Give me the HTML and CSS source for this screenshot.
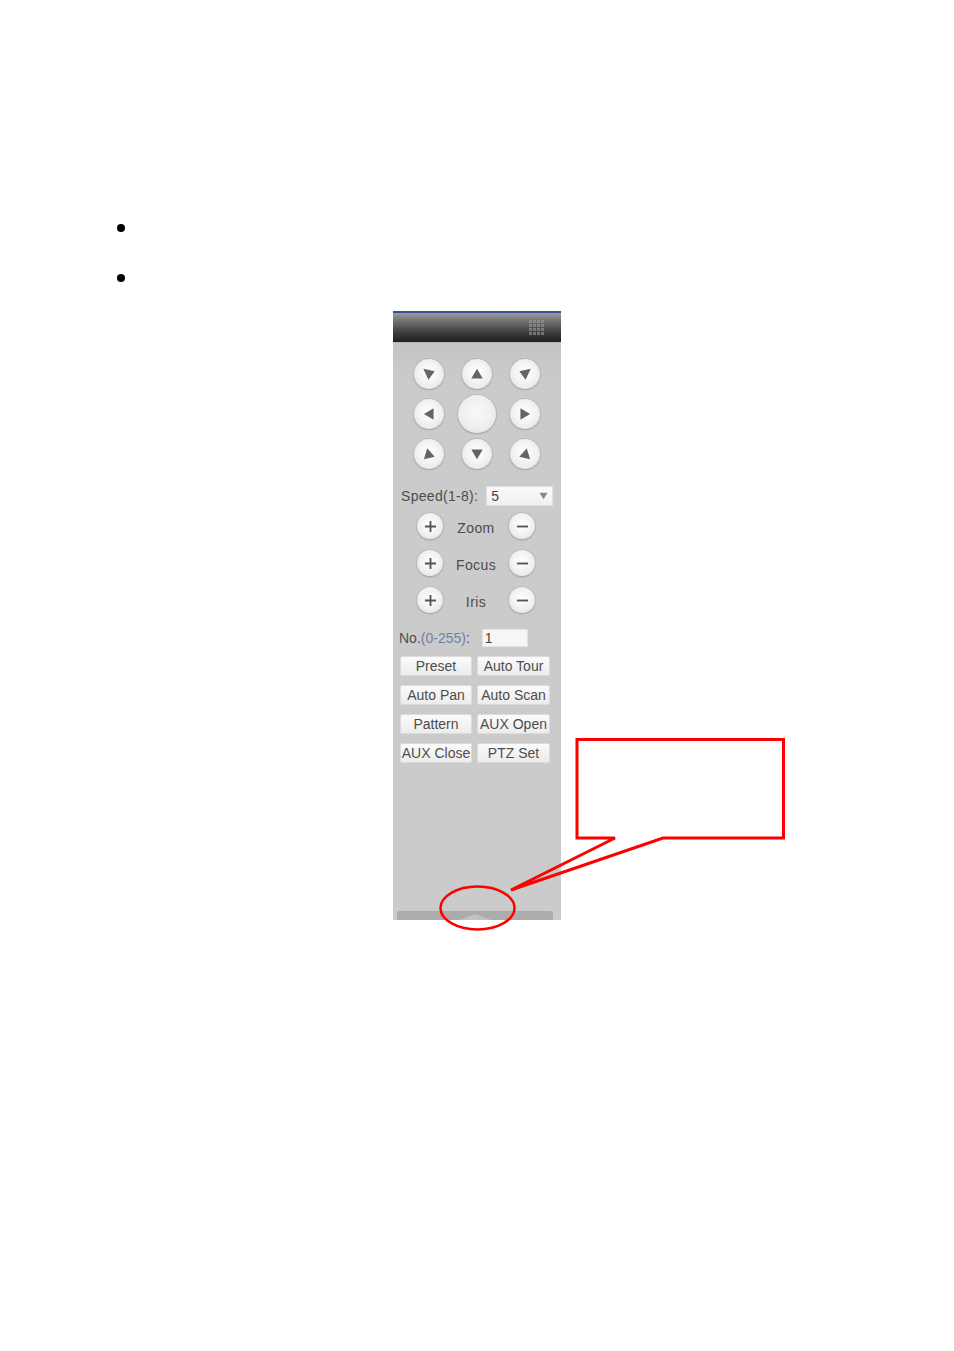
FILE: index.html
```html
<!DOCTYPE html>
<html>
<head>
<meta charset="utf-8">
<title>PTZ</title>
<link rel="stylesheet" href="styles.css">
</head>
<body>
<div class="page">
  <ul class="bullets">
    <li></li>
    <li></li>
  </ul>

  <div class="ptz">
    <div class="ptz-head">
      <span class="grip">
        <i></i><i></i><i></i><i></i>
        <i></i><i></i><i></i><i></i>
        <i></i><i></i><i></i><i></i>
        <i></i><i></i><i></i><i></i>
      </span>
    </div>
    <div class="ptz-body">
      <div class="dir">
        <button class="rb"><svg class="ar" viewBox="0 0 14 14"><path d="M2 2.5 L12 4.5 L6.5 12Z"/></svg></button>
        <button class="rb"><svg class="ar" viewBox="0 0 14 14"><path d="M2 11 L12 11 L7 2.5Z"/></svg></button>
        <button class="rb"><svg class="ar" viewBox="0 0 14 14"><path d="M12 2.5 L2 4.5 L7.5 12Z"/></svg></button>
        <button class="rb"><svg class="ar" viewBox="0 0 14 14"><path d="M11 2 L11 12 L2.5 7Z"/></svg></button>
        <button class="rb center"></button>
        <button class="rb"><svg class="ar" viewBox="0 0 14 14"><path d="M3 2 L3 12 L11.5 7Z"/></svg></button>
        <button class="rb"><svg class="ar" viewBox="0 0 14 14"><path d="M2.5 11.5 L12 9.5 L5.5 2Z"/></svg></button>
        <button class="rb"><svg class="ar" viewBox="0 0 14 14"><path d="M2 3 L12 3 L7 11.5Z"/></svg></button>
        <button class="rb"><svg class="ar" viewBox="0 0 14 14"><path d="M11.5 11.5 L2 9.5 L8.5 2Z"/></svg></button>
      </div>

      <div class="speed">
        <span class="lbl">Speed(1-8):</span>
        <div class="select"><span>5</span><svg class="dd" viewBox="0 0 10 8"><path d="M0.5 0.5 L9.5 0.5 L5 7.5Z"/></svg></div>
      </div>

      <div class="adj first">
        <button class="pm"><svg viewBox="0 0 14 14"><path d="M7 1 V13 M1 7 H13"/></svg></button>
        <span class="adj-lbl">Zoom</span>
        <button class="pm"><svg viewBox="0 0 14 14"><path d="M1 7 H13"/></svg></button>
      </div>
      <div class="adj">
        <button class="pm"><svg viewBox="0 0 14 14"><path d="M7 1 V13 M1 7 H13"/></svg></button>
        <span class="adj-lbl">Focus</span>
        <button class="pm"><svg viewBox="0 0 14 14"><path d="M1 7 H13"/></svg></button>
      </div>
      <div class="adj">
        <button class="pm"><svg viewBox="0 0 14 14"><path d="M7 1 V13 M1 7 H13"/></svg></button>
        <span class="adj-lbl">Iris</span>
        <button class="pm"><svg viewBox="0 0 14 14"><path d="M1 7 H13"/></svg></button>
      </div>

      <div class="no">
        <span class="lbl">No.<span class="sel">(0-255)</span>:</span>
        <div class="input">1</div>
      </div>

      <div class="btns">
        <button class="fb">Preset</button>
        <button class="fb">Auto Tour</button>
        <button class="fb">Auto Pan</button>
        <button class="fb">Auto Scan</button>
        <button class="fb">Pattern</button>
        <button class="fb">AUX Open</button>
        <button class="fb">AUX Close</button>
        <button class="fb">PTZ Set</button>
      </div>

      <div class="tab"><span class="bump"></span></div>
    </div>
  </div>

  <svg class="callout" width="954" height="1351" viewBox="0 0 954 1351">
    <path d="M577 739.5 H783.5 V838 H663 L511 890 L615 838 H577 Z" fill="none" stroke="#ff0000" stroke-width="3"/>
    <ellipse cx="477.5" cy="908" rx="37" ry="21.5" fill="none" stroke="#ff0000" stroke-width="2.5"/>
  </svg>
</div>
</body>
</html>
```

FILE: styles.css
```css
html, body {
  margin: 0;
  padding: 0;
  background: #ffffff;
}

.page {
  position: relative;
  width: 954px;
  min-height: 1351px;
  font-family: "Liberation Sans", Arial, sans-serif;
}

.bullets {
  list-style: none;
  margin: 0;
  padding: 203px 0 0 0;
}

.bullets li {
  position: relative;
  height: 50px;
}

.bullets li::before {
  content: "";
  position: absolute;
  left: 117px;
  top: 21px;
  width: 8px;
  height: 8px;
  border-radius: 50%;
  background: #000;
}

.ptz {
  width: 168px;
  height: 609px;
  margin: 8px auto 0;
  display: flex;
  flex-direction: column;
  background: #cbcbcb;
}

.ptz-head {
  height: 29px;
  border-top: 2px solid #2f5597;
  background: linear-gradient(#9a9ca0 0%, #6e6e70 30%, #3a3a3a 70%, #1f1f1f 100%);
  display: flex;
  justify-content: flex-end;
  align-items: center;
  padding-right: 17px;
}

.grip {
  display: grid;
  grid-template-columns: repeat(4, 3px);
  grid-auto-rows: 3px;
  gap: 1px;
  opacity: 0.6;
}

.grip i {
  display: block;
  background: #9a9a9a;
}

.ptz-body {
  flex: 1;
  display: flex;
  flex-direction: column;
  background: linear-gradient(#c4c4c4, #cbcbcb 40px);
  border-top: 1px solid #b9b9b9;
}

button {
  font-family: inherit;
  padding: 0;
  margin: 0;
  cursor: pointer;
}

.dir {
  display: grid;
  grid-template-columns: repeat(3, 48px);
  grid-template-rows: repeat(3, 40px);
  justify-content: center;
  justify-items: center;
  align-items: center;
  padding-top: 11px;
}

.rb {
  width: 30px;
  height: 30px;
  border-radius: 50%;
  border: none;
  background: radial-gradient(circle at 50% 45%, #ffffff 0%, #f2f2f2 50%, #e2e2e2 85%, #d4d4d4 100%);
  box-shadow: 0 0 0 1px rgba(160,160,160,0.35), 0 1px 2px rgba(0,0,0,0.2);
  display: flex;
  align-items: center;
  justify-content: center;
}

.rb.center {
  width: 38px;
  height: 38px;
  background: radial-gradient(circle at 50% 45%, #f8f8f8 0%, #efefef 55%, #e6e6e6 75%, #fafafa 82%, #d6d6d6 100%);
}

.ar {
  width: 16px;
  height: 16px;
  fill: #656565;
}

.lbl {
  font-size: 14px;
  letter-spacing: 0.3px;
  color: #4d4d4d;
  white-space: nowrap;
}

.speed {
  display: flex;
  align-items: center;
  height: 20px;
  margin-top: 12px;
  padding-left: 8px;
}

.select {
  margin-left: 8px;
  width: 67px;
  height: 20px;
  box-sizing: border-box;
  border: 1px solid #e0e0e0;
  background: linear-gradient(#fafafa, #f0f0f0);
  display: flex;
  align-items: center;
  justify-content: space-between;
  padding: 0 4px;
  font-size: 14px;
  color: #444;
}

.dd {
  width: 9px;
  height: 8px;
  fill: #8a8a8a;
}

.adj {
  display: grid;
  grid-template-columns: 26px 1fr 26px;
  align-items: center;
  height: 26px;
  padding: 0 26px 0 24px;
  margin-top: 11px;
}

.adj.first {
  margin-top: 7px;
}

.pm {
  width: 26px;
  height: 26px;
  border-radius: 50%;
  border: none;
  background: radial-gradient(circle at 50% 45%, #ffffff 0%, #f2f2f2 50%, #e2e2e2 85%, #d4d4d4 100%);
  box-shadow: 0 0 0 1px rgba(160,160,160,0.35), 0 1px 2px rgba(0,0,0,0.2);
  display: flex;
  align-items: center;
  justify-content: center;
}

.pm svg {
  width: 13px;
  height: 13px;
  stroke: #555;
  stroke-width: 2;
  fill: none;
}

.adj-lbl {
  text-align: center;
  font-size: 14px;
  letter-spacing: 0.4px;
  color: #4d4d4d;
  padding-top: 4px;
}

.no {
  display: flex;
  align-items: center;
  height: 18px;
  margin-top: 16px;
  padding-left: 6px;
}

.no .lbl {
  letter-spacing: 0;
}

.sel {
  color: #6d82a3;
}

.input {
  margin-left: 12px;
  width: 46px;
  height: 18px;
  box-sizing: border-box;
  background: #f6f6f6;
  border: 1px solid #e2e2e2;
  font-size: 14px;
  color: #444;
  padding-left: 2px;
  line-height: 16px;
}

.btns {
  display: grid;
  grid-template-columns: 72px 73px;
  grid-auto-rows: 20px;
  column-gap: 5px;
  row-gap: 9px;
  margin-top: 9px;
  padding-left: 7px;
}

.fb {
  border: 1px solid #dcdcdc;
  border-radius: 2px;
  background: linear-gradient(#fbfbfb, #ececec);
  font-size: 14px;
  color: #4d4d4d;
  white-space: nowrap;
  overflow: visible;
  letter-spacing: 0;
}

.tab {
  margin: auto 8px 0 4px;
  height: 9px;
  background: #acacac;
  border-radius: 3px 3px 0 0;
  display: flex;
  justify-content: center;
  align-items: flex-end;
}

.bump {
  width: 0;
  height: 0;
  border-left: 16px solid transparent;
  border-right: 16px solid transparent;
  border-bottom: 6px solid #c2c2c2;
}

.callout {
  position: absolute;
  left: 0;
  top: 0;
  pointer-events: none;
}
```
